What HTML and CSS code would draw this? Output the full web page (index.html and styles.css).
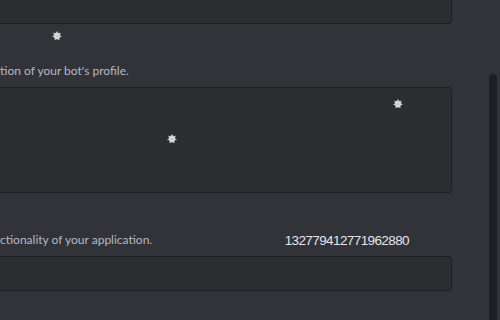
FILE: index.html
```html
<!DOCTYPE html>
<html lang="en">
<head>
    <meta charset="UTF-8">
    <meta name="viewport" content="width=device-width, initial-scale=1.0">
    <title>Bot Settings</title>
    <link rel="stylesheet" href="styles.css">
</head>
<body>
    <div class="page">
        <div class="form">
            <div class="field-input top"></div>

            <p class="hint">tion of your bot's profile.</p>
            <div class="field-input textarea"></div>

            <div class="hint-row">
                <p class="hint">ctionality of your application.</p>
                <span class="app-id">132779412771962880</span>
            </div>
            <div class="field-input single"></div>
        </div>
        <div class="scroll-track">
            <div class="scroll-thumb"></div>
        </div>
    </div>

    <!-- sparkle overlays -->
    <svg class="sparkle s1" viewBox="0 0 10 10"><use href="#flake"/></svg>
    <svg class="sparkle s2" viewBox="0 0 10 10"><use href="#flake"/></svg>
    <svg class="sparkle s3" viewBox="0 0 10 10"><use href="#flake"/></svg>

    <svg width="0" height="0" style="position:absolute">
        <defs>
            <g id="flake">
                <polygon points="5,0 6.3,2 8.8,1.8 8,4.2 10,5.6 7.6,6.6 7.4,9.2 5,8.2 2.6,9.2 2.4,6.6 0,5.6 2,4.2 1.2,1.8 3.7,2" fill="#bfc0c3"/>
                <circle cx="5" cy="5.1" r="2.6" fill="#e6e7e9"/>
                <path d="M3.4 4.2 L6.6 6 M6.6 4.2 L3.4 6" stroke="#9a9ca0" stroke-width="0.6"/>
            </g>
        </defs>
    </svg>
</body>
</html>
```

FILE: styles.css
```css
body {
    margin: 0;
    padding: 0;
    width: 500px;
    height: 320px;
    overflow: hidden;
    background-color: #313338;
    font-family: 'Lato', 'Noto Sans', sans-serif;
    position: relative;
}

.page {
    display: flex;
    height: 320px;
}

.form {
    width: 452px;
    display: flex;
    flex-direction: column;
}

.field-input {
    box-sizing: border-box;
    background-color: #2b2d31;
    border: 1px solid #1e1f22;
    border-left: none;
    border-radius: 0 4px 4px 0;
}

.field-input.top {
    height: 44px;
    margin-top: -20px;
}

.field-input.textarea {
    height: 106px;
    margin-top: 8px;
}

.field-input.single {
    height: 35px;
    margin-top: 8px;
}

.hint {
    margin: 39px 0 0;
    font-size: 12px;
    line-height: 16px;
    color: #b5bac1;
    white-space: nowrap;
}

.hint-row {
    display: flex;
    align-items: flex-end;
}

.app-id {
    margin-left: auto;
    margin-right: 43px;
    font-family: 'Liberation Sans', Arial, sans-serif;
    font-size: 13.5px;
    letter-spacing: -0.6px;
    line-height: 16px;
    color: #e3e5e8;
    position: relative;
    top: 1px;
}

.scroll-track {
    margin-left: 37px;
    width: 8px;
    display: flex;
    flex-direction: column;
}

.scroll-thumb {
    margin-top: 74px;
    flex: 1;
    background-color: #1e1f22;
    border-radius: 4px 4px 0 0;
}

.sparkle {
    position: absolute;
    width: 10px;
    height: 10px;
}

.s1 { left: 52px; top: 31px; }
.s2 { left: 393px; top: 99px; }
.s3 { left: 167px; top: 134px; }
```
